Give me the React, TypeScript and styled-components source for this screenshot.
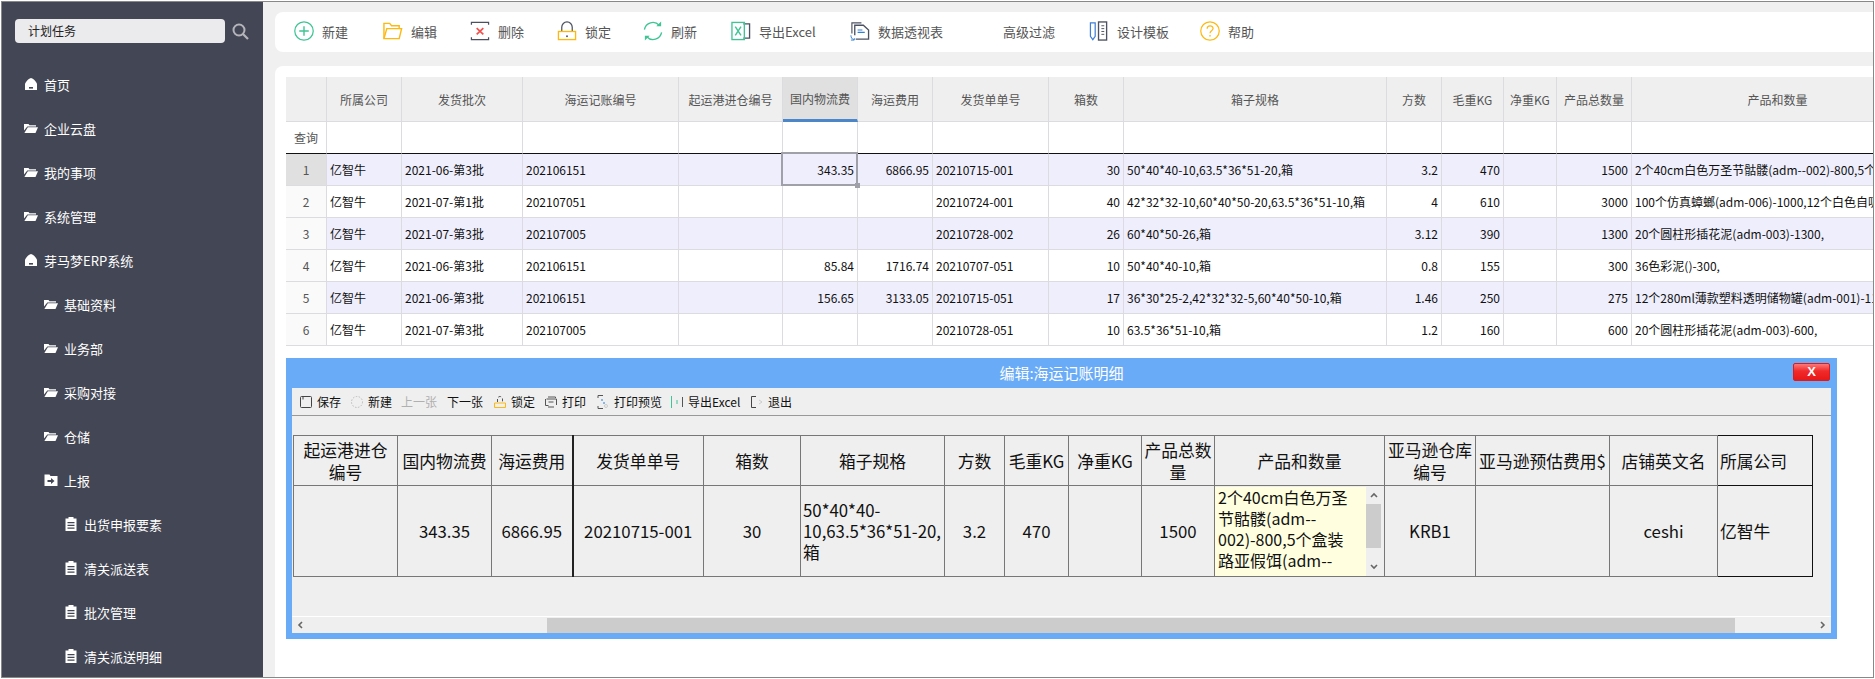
import React from 'react';
import styled, { createGlobalStyle } from 'styled-components';

const FONT = `"Noto Sans CJK SC", "Noto Sans", sans-serif`;

const GlobalStyle = createGlobalStyle`
  html, body {
    margin: 0;
    padding: 0;
    background: #fff;
    font-family: ${FONT};
  }
  * { box-sizing: border-box; }
`;

const Frame = styled.div`
  width: 1873px;
  height: 677px;
  margin: 1px;
  border: 1px solid #888;
  display: flex;
  overflow: hidden;
  background: #f0f0f0;
`;

/* ---------- sidebar ---------- */

const Sidebar = styled.aside`
  width: 261px;
  flex: none;
  background: #434654;
  padding-top: 17px;
  overflow: hidden;
`;

const SearchRow = styled.div`
  display: flex;
  align-items: center;
  padding-left: 13px;
  gap: 7px;
`;

const SearchBox = styled.div`
  width: 210px;
  height: 24px;
  padding-left: 13px;
  border-radius: 4px;
  background: #ebebed;
  color: #222;
  font-size: 12px;
  line-height: 23px;
`;

const Menu = styled.nav`
  margin-top: 19px;
`;

const MenuItem = styled.div<{ $level: number }>`
  height: 44px;
  display: flex;
  align-items: center;
  gap: 6px;
  padding-left: ${({ $level }) => 22 + $level * 20}px;
  color: #fff;
  font-size: 13px;
`;

const MenuIcon = styled.svg`
  width: 14px;
  height: 14px;
  flex: none;
`;

const HomeIcon = () => (
  <MenuIcon viewBox="0 0 14 14">
    <path d="M1 13V6.500C2.500 4 4.500 1.600 7 1c2.500.6 4.500 3 6 5.500V13z" fill="#fff" />
    <rect x="5" y="10" width="4" height="1.600" fill="#434654" />
  </MenuIcon>
);

const FolderIcon = () => (
  <MenuIcon viewBox="0 0 14 14">
    <path d="M0 3h4.500l1 1.200H12v1.300H3.300L0 9.500z" fill="#fff" />
    <path d="M3.800 6.300H14L11.500 12H.4z" fill="#fff" />
  </MenuIcon>
);

const FolderArrowIcon = () => (
  <MenuIcon viewBox="0 0 14 14">
    <path d="M.5 1.500h5l1 1.500h7v10H.5z" fill="#fff" />
    <path d="M3.500 7h3.500V5l3.500 3-3.500 3V9H3.500z" fill="#434654" />
  </MenuIcon>
);

const ClipIcon = () => (
  <MenuIcon viewBox="0 0 14 14">
    <path d="M1.500 1.500h3V0h5v1.500h3V14h-11z" fill="#fff" />
    <path d="M3.500 5h7v1.200h-7zM3.500 7.800h7V9h-7zM3.500 10.600h7v1.200h-7z" fill="#434654" />
  </MenuIcon>
);

const menu: [string, number, React.FC][] = [
  ['首页', 0, HomeIcon],
  ['企业云盘', 0, FolderIcon],
  ['我的事项', 0, FolderIcon],
  ['系统管理', 0, FolderIcon],
  ['芽马梦ERP系统', 0, HomeIcon],
  ['基础资料', 1, FolderIcon],
  ['业务部', 1, FolderIcon],
  ['采购对接', 1, FolderIcon],
  ['仓储', 1, FolderIcon],
  ['上报', 1, FolderArrowIcon],
  ['出货申报要素', 2, ClipIcon],
  ['清关派送表', 2, ClipIcon],
  ['批次管理', 2, ClipIcon],
  ['清关派送明细', 2, ClipIcon],
];

/* ---------- top toolbar ---------- */

const Main = styled.main`
  flex: 1;
  min-width: 0;
  display: flex;
  flex-direction: column;
  padding: 10px 0 0 12px;
`;

const Toolbar = styled.div`
  height: 40px;
  flex: none;
  display: flex;
  align-items: center;
  padding: 0 0 2px 19px;
  background: #fff;
  border-radius: 8px 0 0 8px;
`;

const ToolItem = styled.div<{ $slot?: number }>`
  width: ${({ $slot }) => ($slot ? `${$slot}px` : 'auto')};
  flex: none;
  display: flex;
  align-items: center;
  gap: 8px;
  color: #555;
  font-size: 13px;
  white-space: nowrap;
`;

const ToolIcon = styled.svg`
  width: 20px;
  height: 20px;
  flex: none;
`;

const iconNew = (
  <ToolIcon viewBox="0 0 21 21" fill="none">
    <circle cx="10.500" cy="10.500" r="9.700" stroke="#3fc495" strokeWidth="1.300" />
    <path d="M10.500 5.500v10M5.500 10.500h10" stroke="#3fc495" strokeWidth="1.500" />
  </ToolIcon>
);
const iconEdit = (
  <ToolIcon viewBox="0 0 21 21" fill="none" stroke="#fdb913" strokeWidth="1.500">
    <path d="M1 18.500V2.500h6l2 2.500h8v3" />
    <path d="M1 18.500l3-10.500h15.500l-2.500 10.500z" />
  </ToolIcon>
);
const iconDelete = (
  <ToolIcon viewBox="0 0 21 21" fill="none">
    <path d="M1.500 4V1.500h18V4M1.500 17v2.500h18V17" stroke="#4b5160" strokeWidth="1.300" />
    <path d="M7 7.500l7 6.500M14 7.500l-7 6.500" stroke="#f0524f" strokeWidth="1.800" />
  </ToolIcon>
);
const iconLock = (
  <ToolIcon viewBox="0 0 21 21" fill="none">
    <path d="M5 11V6.500a5.500 5.500 0 0 1 11 0V11" stroke="#4b5160" strokeWidth="1.300" />
    <rect x="1.500" y="11" width="18" height="8.500" stroke="#fdb913" strokeWidth="1.400" />
    <circle cx="10.500" cy="16" r="1" fill="#4b5160" />
  </ToolIcon>
);
const iconRefresh = (
  <ToolIcon viewBox="0 0 21 21" fill="none" stroke="#3fc495" strokeWidth="1.400">
    <path d="M1.500 9A9 9 0 0 1 17 4.500" />
    <path d="M19.500 12A9 9 0 0 1 4 16.500" />
    <path d="M19 .5v5h-5z" fill="#3fc495" strokeWidth="0" />
    <path d="M2 20.500v-5h5z" fill="#3fc495" strokeWidth="0" />
  </ToolIcon>
);
const iconExcel = (
  <ToolIcon viewBox="0 0 21 21" fill="none">
    <path d="M13 3h6.500v15H13" stroke="#4b5160" strokeWidth="1.400" />
    <rect x="1" y="1.500" width="13" height="18" stroke="#3fc495" strokeWidth="1.400" />
    <path d="M4.500 6l6 9M10.500 6l-6 9" stroke="#3fc495" strokeWidth="1.500" />
  </ToolIcon>
);
const iconPivot = (
  <ToolIcon viewBox="0 0 21 21" fill="none">
    <path d="M2 13V2h10" stroke="#4b5160" strokeWidth="1.200" />
    <path d="M5 15V4.500h9l5.500 5V19H6" stroke="#4b5160" strokeWidth="1.400" />
    <path d="M8 9.500h5M8 12h7.500" stroke="#2f7fd6" strokeWidth="1.200" />
    <path d="M1 15c0 2.500 1 4 3 4.500M1 20h3.500v-2" stroke="#2f7fd6" strokeWidth="1" />
  </ToolIcon>
);
const iconDesign = (
  <ToolIcon viewBox="0 0 21 21" fill="none">
    <path d="M1.500 2h5v14l-2.500 3.500L1.500 16z" stroke="#3f7fd6" strokeWidth="1.300" />
    <rect x="10" y="1" width="8.500" height="19" stroke="#4b5160" strokeWidth="1.400" />
    <path d="M13 5h3M13 8h3M13 11h3M13 14h3" stroke="#4b5160" strokeWidth="1" />
  </ToolIcon>
);
const iconHelp = (
  <ToolIcon viewBox="0 0 21 21" fill="none">
    <circle cx="10.500" cy="10.500" r="9.700" stroke="#fdb913" strokeWidth="1.300" />
    <path d="M7.500 8.200c0-4 6.200-4 6.200-.3 0 2.300-3.200 2.300-3.200 5" stroke="#fdb913" strokeWidth="1.300" />
    <circle cx="10.500" cy="15.500" r=".9" fill="#fdb913" />
  </ToolIcon>
);

const topTools: [string, React.ReactNode, number][] = [
  ['新建', iconNew, 89],
  ['编辑', iconEdit, 87],
  ['删除', iconDelete, 87],
  ['锁定', iconLock, 86],
  ['刷新', iconRefresh, 88],
  ['导出Excel', iconExcel, 119],
  ['数据透视表', iconPivot, 153],
  ['高级过滤', null, 86],
  ['设计模板', iconDesign, 111],
  ['帮助', iconHelp, 0],
];

/* ---------- grid ---------- */

const Panel = styled.section`
  flex: 1;
  min-height: 0;
  margin-top: 14px;
  padding: 11px 0 0 11px;
  background: #fff;
  border-radius: 8px 0 0 0;
  overflow: hidden;
`;

const GridClip = styled.div`
  overflow: hidden;
`;

const Grid = styled.table`
  width: 1638px;
  table-layout: fixed;
  border-collapse: separate;
  border-spacing: 0;
  font-size: 12px;
  color: #111;
`;

const HeadCell = styled.th<{ $active?: boolean }>`
  height: 45px;
  padding: 0;
  font-weight: 400;
  text-align: center;
  color: #555;
  background: ${({ $active }) => ($active ? '#e0e0e0' : '#efefef')};
  border-right: 1px solid #dcdce0;
  border-bottom: ${({ $active }) => ($active ? '3px solid #4a86c8' : '1px solid #dcdce0')};
`;

const QueryCell = styled.td`
  height: 32px;
  padding: 0;
  text-align: center;
  color: #555;
  background: #fff;
  border-right: 1px solid #dcdce0;
  border-bottom: 1px solid #111;
`;

const IndexCell = styled.td<{ $selected: boolean }>`
  height: 32px;
  padding: 0;
  text-align: center;
  color: #555;
  background: ${({ $selected }) => ($selected ? '#e0e0e0' : '#fafafa')};
  border-right: 1px solid #dcdce0;
  border-bottom: 1px solid #dcdce0;
`;

const DataCell = styled.td<{ $alt: boolean; $num?: boolean; $focus?: boolean }>`
  position: relative;
  height: 32px;
  padding: 0 3px;
  white-space: nowrap;
  overflow: ${({ $focus }) => ($focus ? 'visible' : 'hidden')};
  text-align: ${({ $num }) => ($num ? 'right' : 'left')};
  background: ${({ $alt }) => ($alt ? '#eeeefc' : '#fff')};
  border-right: 1px solid #dcdce0;
  border-bottom: 1px solid #dcdce0;

  ${({ $focus }) =>
    $focus &&
    `
    z-index: 1;
    &::after {
      content: '';
      position: absolute;
      inset: -2px -1px -1px -2px;
      border: 2px solid #a0a0a8;
    }
    &::before {
      content: '';
      position: absolute;
      right: -3px;
      bottom: -3px;
      width: 5px;
      height: 5px;
      background: #a0a0a8;
      z-index: 1;
    }
  `}
`;

const gridCols = [41, 75, 121, 156, 104, 75, 75, 116, 75, 263, 55, 62, 53, 75, 292];
const gridHead = ['', '所属公司', '发货批次', '海运记账编号', '起运港进仓编号', '国内物流费', '海运费用', '发货单单号', '箱数', '箱子规格', '方数', '毛重KG', '净重KG', '产品总数量', '产品和数量'];

type Row = {
  batch: string; bill: string; domestic: string; sea: string; order: string; boxes: string;
  spec: string; cube: string; gross: string; qty: string; product: string;
};

const rows: Row[] = [
  { batch: '2021-06-第3批', bill: '202106151', domestic: '343.35', sea: '6866.95', order: '20210715-001', boxes: '30', spec: '50*40*40-10,63.5*36*51-20,箱', cube: '3.2', gross: '470', qty: '1500', product: '2个40cm白色万圣节骷髅(adm--002)-800,5个盒装路亚假饵(adm--' },
  { batch: '2021-07-第1批', bill: '202107051', domestic: '', sea: '', order: '20210724-001', boxes: '40', spec: '42*32*32-10,60*40*50-20,63.5*36*51-10,箱', cube: '4', gross: '610', qty: '3000', product: '100个仿真蟑螂(adm-006)-1000,12个白色自吸盘挂钩' },
  { batch: '2021-07-第3批', bill: '202107005', domestic: '', sea: '', order: '20210728-002', boxes: '26', spec: '60*40*50-26,箱', cube: '3.12', gross: '390', qty: '1300', product: '20个圆柱形插花泥(adm-003)-1300,' },
  { batch: '2021-06-第3批', bill: '202106151', domestic: '85.84', sea: '1716.74', order: '20210707-051', boxes: '10', spec: '50*40*40-10,箱', cube: '0.8', gross: '155', qty: '300', product: '36色彩泥()-300,' },
  { batch: '2021-06-第3批', bill: '202106151', domestic: '156.65', sea: '3133.05', order: '20210715-051', boxes: '17', spec: '36*30*25-2,42*32*32-5,60*40*50-10,箱', cube: '1.46', gross: '250', qty: '275', product: '12个280ml薄款塑料透明储物罐(adm-001)-1100,' },
  { batch: '2021-07-第3批', bill: '202107005', domestic: '', sea: '', order: '20210728-051', boxes: '10', spec: '63.5*36*51-10,箱', cube: '1.2', gross: '160', qty: '600', product: '20个圆柱形插花泥(adm-003)-600,' },
];

/* ---------- dialog ---------- */

const Dialog = styled.div`
  width: 1551px;
  height: 281px;
  margin-top: 12px;
  display: flex;
  flex-direction: column;
  background: #6aabf7;
  border: 6px solid #6aabf7;
  border-top: 0;
`;

const TitleBar = styled.div`
  position: relative;
  height: 30px;
  flex: none;
  color: #fff;
  font-size: 15px;
  line-height: 30px;
  text-align: center;
`;

const CloseButton = styled.div`
  position: absolute;
  top: 5px;
  right: 1px;
  width: 37px;
  height: 18px;
  border: 1px solid #e01a1a;
  border-radius: 2px;
  background: linear-gradient(#f77 0%, #f02a2a 45%, #e81818 100%);
  color: #fff;
  font-family: "Liberation Sans", sans-serif;
  font-size: 13px;
  font-weight: 700;
  line-height: 16px;
`;

const DialogBody = styled.div`
  flex: 1;
  min-height: 0;
  display: flex;
  flex-direction: column;
  background: #efefef;
`;

const DialogTools = styled.div`
  height: 28px;
  flex: none;
  display: flex;
  align-items: center;
  padding-left: 8px;
  border-bottom: 1px solid #999;
`;

const DialogTool = styled.div<{ $slot?: number; $off?: boolean }>`
  width: ${({ $slot }) => ($slot ? `${$slot}px` : 'auto')};
  flex: none;
  display: flex;
  align-items: center;
  gap: 5px;
  font-size: 12px;
  white-space: nowrap;
  color: ${({ $off }) => ($off ? '#b0b0b0' : '#111')};
`;

const SmallIcon = styled.svg`
  width: 12px;
  height: 14px;
  flex: none;
`;

const smSave = (
  <SmallIcon viewBox="0 0 12 14" fill="none">
    <path d="M.5 2.500a1 1 0 0 1 1-1h9a1 1 0 0 1 1 1v9a1 1 0 0 1-1 1h-9a1 1 0 0 1-1-1z" stroke="#444" />
    <path d="M3 1.500v3" stroke="#444" />
  </SmallIcon>
);
const smNew = (
  <SmallIcon viewBox="0 0 12 14" fill="none">
    <circle cx="6" cy="7" r="5.500" stroke="#bbb" strokeDasharray="1.500 1.500" />
  </SmallIcon>
);
const smLock = (
  <SmallIcon viewBox="0 0 12 14" fill="none">
    <path d="M3.500 7V4a2.500 2.500 0 0 1 5 0v3" stroke="#555" strokeDasharray="3 2" />
    <path d="M.5 8v4.500h11V8" stroke="#fdb913" />
    <path d="M.5 8h11" stroke="#fdb913" />
  </SmallIcon>
);
const smPrint = (
  <SmallIcon viewBox="0 0 12 14" fill="none">
    <path d="M3 2h7.500v1M1.500 4h10v6M.5 4v6.500h3M3.500 7h5M3 12h6" stroke="#555" />
  </SmallIcon>
);
const smPreview = (
  <SmallIcon viewBox="0 0 12 14" fill="none">
    <path d="M1 3V.5h5M1 11v2.500h5" stroke="#555" />
    <path d="M5 4v2M7 7v2" stroke="#2f7fd6" />
    <circle cx="9" cy="11" r="1.500" stroke="#ccc" />
  </SmallIcon>
);
const smExcel = (
  <SmallIcon viewBox="0 0 12 14" fill="none">
    <path d="M.5 1v12" stroke="#3fc495" />
    <path d="M6 5v4" stroke="#3fc495" />
    <path d="M11.500 2v10" stroke="#555" />
  </SmallIcon>
);
const smExit = (
  <SmallIcon viewBox="0 0 12 14" fill="none">
    <path d="M5 1.500H.5v11H5" stroke="#444" />
    <path d="M8 5l3 2-3 2" stroke="#ccc" />
  </SmallIcon>
);

const dialogTools: [string, React.ReactNode, number, boolean?][] = [
  ['保存', smSave, 51],
  ['新建', smNew, 50],
  ['上一张', null, 46, true],
  ['下一张', null, 47],
  ['锁定', smLock, 51],
  ['打印', smPrint, 52],
  ['打印预览', smPreview, 74],
  ['导出Excel', smExcel, 80],
  ['退出', smExit, 0],
];

const FormArea = styled.div`
  flex: 1;
  min-height: 0;
  padding: 19px 0 0 1px;
`;

const FormTable = styled.table`
  width: 1519px;
  table-layout: fixed;
  border-collapse: collapse;
  font-size: 16.800px;
  color: #111;
`;

const FormHead = styled.th<{ $strong?: boolean; $last?: boolean; $left?: boolean }>`
  height: 50px;
  padding: 0 2px;
  font-weight: 400;
  line-height: 22px;
  text-align: ${({ $left }) => ($left ? 'left' : 'center')};
  border: 1px solid ${({ $last }) => ($last ? '#111' : '#777')};
  ${({ $strong }) => $strong && 'border-right: 2px solid #222;'}
`;

const FormCell = styled.td<{ $strong?: boolean; $last?: boolean; $left?: boolean; $flush?: boolean }>`
  height: 91px;
  padding: ${({ $flush }) => ($flush ? '0' : '0 2px')};
  line-height: 21px;
  text-align: ${({ $left }) => ($left ? 'left' : 'center')};
  vertical-align: middle;
  border: 1px solid ${({ $last }) => ($last ? '#111' : '#777')};
  ${({ $strong }) => $strong && 'border-right: 2px solid #222;'}
`;

const MemoBox = styled.div`
  height: 89px;
  width: 167px;
  display: flex;
  text-align: left;
  font-size: 16px;
`;

const MemoText = styled.div`
  width: 151px;
  height: 89px;
  padding-left: 3px;
  background: #ffffe0;
  white-space: nowrap;
  overflow: hidden;
`;

const MemoScroll = styled.div`
  width: 15px;
  display: flex;
  flex-direction: column;
  background: #efefef;
`;

const MemoThumb = styled.div`
  height: 44px;
  flex: none;
  background: #ccc;
  margin-bottom: auto;
`;

const ArrowBox = styled.div<{ $h: number }>`
  height: ${({ $h }) => $h}px;
  flex: none;
  display: flex;
  align-items: center;
  justify-content: center;
`;

const HBar = styled.div`
  height: 17px;
  flex: none;
  display: flex;
  align-items: center;
  border-top: 1px solid #fff;
`;

const HThumb = styled.div`
  width: 1188px;
  height: 15px;
  margin: 0 auto 0 239px;
  background: #ccc;
`;

const HArrow = styled.div`
  width: 16px;
  display: flex;
  justify-content: center;
`;

const Chevron = ({ d }: { d: string }) => (
  <svg width="8" height="8" viewBox="0 0 8 8" fill="none">
    <path d={d} stroke="#666" strokeWidth="1.600" />
  </svg>
);

const formCols = [104, 94, 81, 131, 97, 144, 60, 64, 73, 73, 170, 91, 134, 108, 95];

export default function App() {
  return (
    <>
      <GlobalStyle />
      <Frame>
        <Sidebar>
          <SearchRow>
            <SearchBox>计划任务</SearchBox>
            <svg width="17" height="17" viewBox="0 0 17 17" fill="none">
              <circle cx="7" cy="7" r="5.500" stroke="#b4b5bb" strokeWidth="2" />
              <path d="M11 11l5 5" stroke="#b4b5bb" strokeWidth="2.200" />
            </svg>
          </SearchRow>
          <Menu>
            {menu.map(([text, level, Icon]) => (
              <MenuItem key={text} $level={level}>
                <Icon />
                {text}
              </MenuItem>
            ))}
          </Menu>
        </Sidebar>
        <Main>
          <Toolbar>
            {topTools.map(([text, icon, slot]) => (
              <ToolItem key={text} $slot={slot}>
                {icon}
                {text}
              </ToolItem>
            ))}
          </Toolbar>
          <Panel>
            <GridClip>
              <Grid>
                <colgroup>
                  {gridCols.map((w, i) => <col key={i} width={w} />)}
                </colgroup>
                <thead>
                  <tr>
                    {gridHead.map((h, i) => <HeadCell key={i} $active={h === '国内物流费'}>{h}</HeadCell>)}
                  </tr>
                </thead>
                <tbody>
                  <tr>
                    <QueryCell>查询</QueryCell>
                    {gridHead.slice(1).map((h) => <QueryCell key={h} />)}
                  </tr>
                  {rows.map((r, i) => {
                    const alt = i % 2 === 0;
                    return (
                      <tr key={i}>
                        <IndexCell $selected={i === 0}>{i + 1}</IndexCell>
                        <DataCell $alt={alt}>亿智牛</DataCell>
                        <DataCell $alt={alt}>{r.batch}</DataCell>
                        <DataCell $alt={alt}>{r.bill}</DataCell>
                        <DataCell $alt={alt} />
                        <DataCell $alt={alt} $num $focus={i === 0}>{r.domestic}</DataCell>
                        <DataCell $alt={alt} $num>{r.sea}</DataCell>
                        <DataCell $alt={alt}>{r.order}</DataCell>
                        <DataCell $alt={alt} $num>{r.boxes}</DataCell>
                        <DataCell $alt={alt}>{r.spec}</DataCell>
                        <DataCell $alt={alt} $num>{r.cube}</DataCell>
                        <DataCell $alt={alt} $num>{r.gross}</DataCell>
                        <DataCell $alt={alt} />
                        <DataCell $alt={alt} $num>{r.qty}</DataCell>
                        <DataCell $alt={alt}>{r.product}</DataCell>
                      </tr>
                    );
                  })}
                </tbody>
              </Grid>
            </GridClip>
            <Dialog>
              <TitleBar>
                编辑:海运记账明细
                <CloseButton>X</CloseButton>
              </TitleBar>
              <DialogBody>
                <DialogTools>
                  {dialogTools.map(([text, icon, slot, off]) => (
                    <DialogTool key={text} $slot={slot} $off={off}>
                      {icon}
                      {text}
                    </DialogTool>
                  ))}
                </DialogTools>
                <FormArea>
                  <FormTable>
                    <colgroup>
                      {formCols.map((w, i) => <col key={i} width={w} />)}
                    </colgroup>
                    <thead>
                      <tr>
                        <FormHead>起运港进仓编号</FormHead>
                        <FormHead>国内物流费</FormHead>
                        <FormHead $strong>海运费用</FormHead>
                        <FormHead>发货单单号</FormHead>
                        <FormHead>箱数</FormHead>
                        <FormHead>箱子规格</FormHead>
                        <FormHead>方数</FormHead>
                        <FormHead>毛重KG</FormHead>
                        <FormHead>净重KG</FormHead>
                        <FormHead>产品总数量</FormHead>
                        <FormHead>产品和数量</FormHead>
                        <FormHead>亚马逊仓库编号</FormHead>
                        <FormHead>亚马逊预估费用$</FormHead>
                        <FormHead>店铺英文名</FormHead>
                        <FormHead $last $left>所属公司</FormHead>
                      </tr>
                    </thead>
                    <tbody>
                      <tr>
                        <FormCell />
                        <FormCell>343.35</FormCell>
                        <FormCell $strong>6866.95</FormCell>
                        <FormCell>20210715-001</FormCell>
                        <FormCell>30</FormCell>
                        <FormCell $left>50*40*40-<br />10,63.5*36*51-20,<br />箱</FormCell>
                        <FormCell>3.2</FormCell>
                        <FormCell>470</FormCell>
                        <FormCell />
                        <FormCell>1500</FormCell>
                        <FormCell $flush>
                          <MemoBox>
                            <MemoText>
                              2个40cm白色万圣<br />节骷髅(adm--<br />002)-800,5个盒装<br />路亚假饵(adm--
                            </MemoText>
                            <MemoScroll>
                              <ArrowBox $h={17}><Chevron d="M1 6l3-3 3 3" /></ArrowBox>
                              <MemoThumb />
                              <ArrowBox $h={17}><Chevron d="M1 2l3 3 3-3" /></ArrowBox>
                            </MemoScroll>
                          </MemoBox>
                        </FormCell>
                        <FormCell>KRB1</FormCell>
                        <FormCell />
                        <FormCell>ceshi</FormCell>
                        <FormCell $last $left>亿智牛</FormCell>
                      </tr>
                    </tbody>
                  </FormTable>
                </FormArea>
                <HBar>
                  <HArrow><Chevron d="M6 1L3 4l3 3" /></HArrow>
                  <HThumb />
                  <HArrow><Chevron d="M2 1l3 3-3 3" /></HArrow>
                </HBar>
              </DialogBody>
            </Dialog>
          </Panel>
        </Main>
      </Frame>
    </>
  );
}
